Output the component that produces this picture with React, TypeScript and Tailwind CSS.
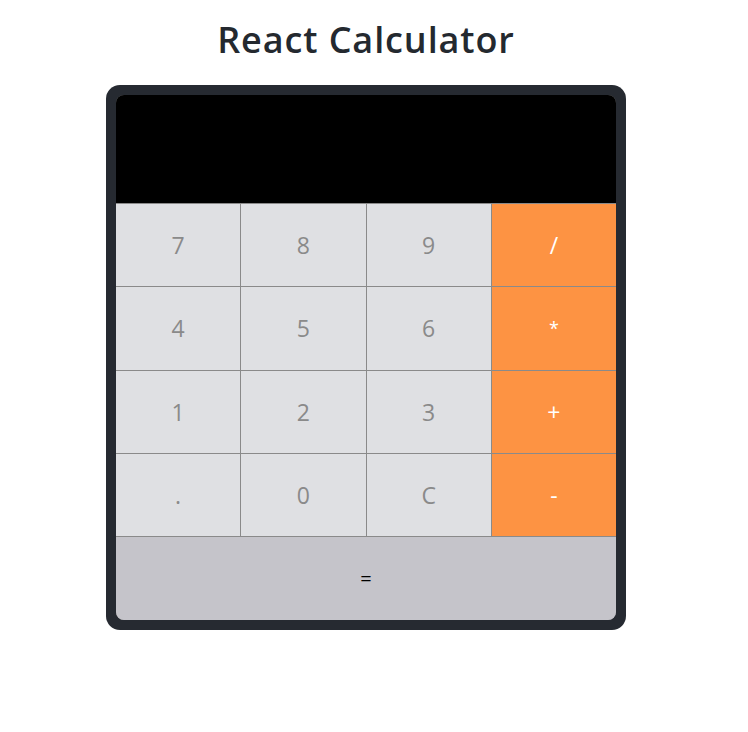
import React from "react";

const rows = [
  ["7", "8", "9", "/"],
  ["4", "5", "6", "*"],
  ["1", "2", "3", "+"],
  [".", "0", "C", "-"],
];

export default function App() {
  return (
    <div className="w-[732px] h-[732px] bg-white flex flex-col items-center" style={{ fontFamily: '"Open Sans", "Liberation Sans", sans-serif' }}>
      <h1 className="mt-[18px] text-[36px] leading-[44px] font-semibold text-[#24292f] tracking-[0.9px]">React Calculator</h1>
      <div className="mt-[23px] w-[520px] h-[545px] bg-[#262a31] rounded-[14px] p-[10px]">
        <div className="w-full h-full rounded-[8px] overflow-hidden flex flex-col bg-[#8a8a8a]">
          <div className="h-[108px] bg-black shrink-0"></div>
          <div className="mt-px grid grid-cols-4 grid-rows-[82px_83px_82px_82px] gap-px">
            {rows.flat().map((k) => {
              const op = ["/", "*", "+", "-"].includes(k);
              return (
                <div
                  key={k}
                  className={
                    op
                      ? "bg-[#fd9343] text-white flex items-center justify-center " + (k === "*" ? "text-[18px]" : "text-[23px]")
                      : "bg-[#dfe0e3] text-[#8a8a8a] text-[23px] flex items-center justify-center"
                  }
                >
                  {k}
                </div>
              );
            })}
          </div>
          <div className="mt-px flex-1 bg-[#c5c4ca] text-black text-[20px] flex items-center justify-center">=</div>
        </div>
      </div>
    </div>
  );
}
